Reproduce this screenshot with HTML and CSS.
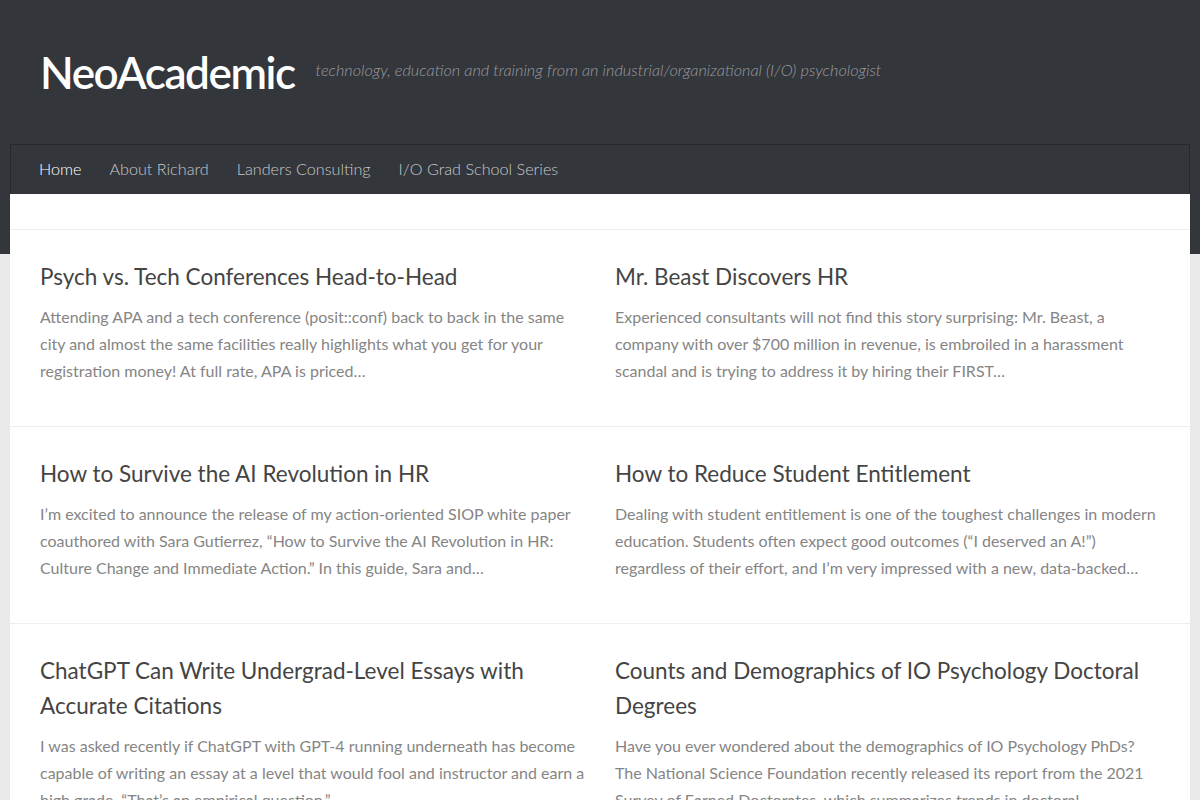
FILE: index.html
```html
<!DOCTYPE html>
<html lang="en">
<head>
<meta charset="utf-8">
<title>NeoAcademic</title>
<link rel="stylesheet" href="styles.css">
</head>
<body>
<header class="site-header">
  <div class="branding">
    <h1 class="site-title">NeoAcademic</h1>
    <p class="site-tagline">technology, education and training from an industrial/organizational (I/O) psychologist</p>
  </div>
  <nav class="main-nav">
    <a class="nav-link current" href="#">Home</a>
    <a class="nav-link" href="#">About Richard</a>
    <a class="nav-link" href="#">Landers Consulting</a>
    <a class="nav-link" href="#">I/O Grad School Series</a>
  </nav>
</header>

<main class="page">
  <div class="page-top"></div>

  <section class="post-row">
    <article class="post">
      <h2 class="post-title">Psych vs. Tech Conferences Head-to-Head</h2>
      <p class="post-excerpt">Attending APA and a tech conference (posit::conf) back to back in the same city and almost the same facilities really highlights what you get for your registration money! At full rate, APA is priced…</p>
    </article>
    <article class="post">
      <h2 class="post-title">Mr. Beast Discovers HR</h2>
      <p class="post-excerpt">Experienced consultants will not find this story surprising: Mr. Beast, a company with over $700 million in revenue, is embroiled in a harassment scandal and is trying to address it by hiring their FIRST…</p>
    </article>
  </section>

  <section class="post-row">
    <article class="post">
      <h2 class="post-title">How to Survive the AI Revolution in HR</h2>
      <p class="post-excerpt">I’m excited to announce the release of my action-oriented SIOP white paper coauthored with Sara Gutierrez, “How to Survive the AI Revolution in HR: Culture Change and Immediate Action.” In this guide, Sara and…</p>
    </article>
    <article class="post">
      <h2 class="post-title">How to Reduce Student Entitlement</h2>
      <p class="post-excerpt">Dealing with student entitlement is one of the toughest challenges in modern education. Students often expect good outcomes (“I deserved an A!”) regardless of their effort, and I’m very impressed with a new, data-backed…</p>
    </article>
  </section>

  <section class="post-row">
    <article class="post">
      <h2 class="post-title">ChatGPT Can Write Undergrad-Level Essays with Accurate Citations</h2>
      <p class="post-excerpt">I was asked recently if ChatGPT with GPT-4 running underneath has become capable of writing an essay at a level that would fool and instructor and earn a high grade. “That’s an empirical question.”</p>
    </article>
    <article class="post">
      <h2 class="post-title">Counts and Demographics of IO Psychology Doctoral Degrees</h2>
      <p class="post-excerpt">Have you ever wondered about the demographics of IO Psychology PhDs? The National Science Foundation recently released its report from the 2021 Survey of Earned Doctorates, which summarizes trends in doctoral education…</p>
    </article>
  </section>
</main>
</body>
</html>
```

FILE: styles.css
```css
html, body {
  margin: 0;
  padding: 0;
}

body {
  background: #eaeaea;
  font-family: Lato, "Noto Sans", sans-serif;
  color: #666;
}

/* dark masthead, runs 60px under the white page */
.site-header {
  background: #33363b;
  padding: 0 10px 60px;
}

.branding {
  height: 144px;
  display: flex;
  align-items: center;
  padding-left: 30px;
  box-sizing: border-box;
}

.site-title {
  margin: 0;
  font-size: 44px;
  font-weight: 600;
  color: #fff;
  letter-spacing: -1.45px;
  line-height: 1;
}

.site-tagline {
  margin: 0 0 0 21px;
  padding-bottom: 5px;
  font-size: 16.3px;
  font-style: italic;
  font-weight: 300;
  color: #9a9b9e;
}

.main-nav {
  height: 50px;
  display: flex;
  align-items: center;
  padding: 0 0 2px 14px;
  border: 1px solid #27292d;
  border-bottom: none;
  box-sizing: border-box;
}

.nav-link {
  padding: 0 14px;
  font-size: 16.2px;
  font-weight: 300;
  color: #c7c8ca;
  text-decoration: none;
}

.nav-link.current {
  color: #fff;
}

/* white page body */
.page {
  background: #fff;
  margin: -60px 10px 0;
}

.page-top {
  height: 35px;
  border-bottom: 1px solid #eee;
}

.post-row {
  display: grid;
  grid-template-columns: 1fr 1fr;
  column-gap: 30px;
  padding: 29px 30px 42px;
  border-bottom: 1px solid #eee;
}

.post-title {
  margin: 0 0 9px;
  font-size: 22.5px;
  font-weight: 400;
  line-height: 35px;
  color: #444;
}

.post-excerpt {
  margin: 0;
  font-size: 16px;
  line-height: 27px;
  color: #858585;
}
```
